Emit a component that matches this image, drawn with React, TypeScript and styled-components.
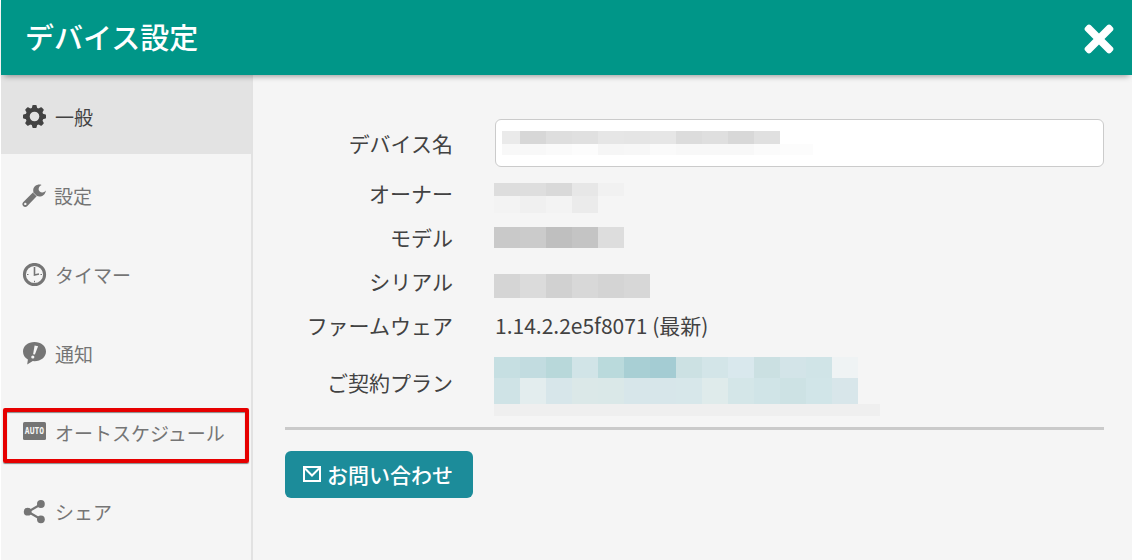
import React from "react";
import styled, { createGlobalStyle } from "styled-components";
import { FaTimes } from "react-icons/fa";

const GlobalStyle = createGlobalStyle`
  *, *::before, *::after { box-sizing: border-box; }
  body {
    margin: 0;
    background: #fff;
    color: #424242;
    font-family: "Noto Sans CJK JP", "Noto Sans", sans-serif;
  }
`;

const Page = styled.div`
  min-height: 100vh;
  display: flex;
  flex-direction: column;
  padding-left: 1px;
`;

const Header = styled.header`
  position: relative;
  z-index: 1;
  display: flex;
  align-items: center;
  justify-content: space-between;
  height: 75px;
  padding: 2px 12px 0 24px;
  background: #009688;
  color: #fff;
  box-shadow: 0 4px 6px -3px rgba(0, 0, 0, 0.4);
`;

const Title = styled.h1`
  margin: 0 0 6px;
  font-size: 29px;
  line-height: 44px;
  font-weight: 500;
`;

const CloseButton = styled.button`
  display: flex;
  padding: 0;
  border: 0;
  background: none;
  color: inherit;
  cursor: pointer;
`;

const Body = styled.div`
  flex: 1;
  display: flex;
  background: #f5f5f5;
`;

const Sidebar = styled.nav`
  flex: none;
  width: 252px;
  border-right: 2px solid #e2e2e2;
`;

const NavItem = styled.a<{ $active?: boolean }>`
  position: relative;
  display: flex;
  align-items: center;
  gap: 8px;
  height: 79px;
  padding: 5px 0 0 21px;
  font-size: 19px;
  line-height: 28px;
  text-decoration: none;
  color: ${(p) => (p.$active ? "#424242" : "#757575")};
  background: ${(p) => (p.$active ? "#e3e3e3" : "transparent")};

  svg { flex: none; }
`;

const Highlight = styled.span`
  position: absolute;
  inset: 17px 2px 7px 2px;
  border: 4px solid #e60000;
  border-radius: 2px;
  box-shadow: 0 1px 1px rgba(0, 0, 0, 0.45), inset 0 1px 1px rgba(0, 0, 0, 0.45);
`;

const Main = styled.main`
  flex: 1;
  min-width: 0;
  padding: 44px 28px 32px 32px;
`;

const Row = styled.div`
  display: grid;
  grid-template-columns: 168px 1fr;
  column-gap: 42px;
  align-items: center;
  min-height: 44px;
  font-size: 21px;
  line-height: 32px;

  &:first-child { margin-bottom: 4px; }
`;

const Label = styled.label`
  text-align: right;
`;

const Term = styled.span`
  text-align: right;
`;

const InputBox = styled.div`
  position: relative;
`;

const TextInput = styled.input`
  display: block;
  width: 100%;
  height: 48px;
  padding: 0 8px;
  border: 1px solid #cbcbcb;
  border-radius: 6px;
  background: #fff;
  font: inherit;
`;

const InputMask = styled.div`
  position: absolute;
  top: 12px;
  left: 8px;
  pointer-events: none;
`;

const MaskBlock = styled.div<{ $inset: number }>`
  margin-left: -1px;
  padding-top: ${(p) => p.$inset}px;
`;

const MaskRow = styled.div<{ $height: number }>`
  display: flex;
  height: ${(p) => p.$height}px;
`;

const MaskCell = styled.span<{ $color: string; $width: number }>`
  width: ${(p) => p.$width}px;
  background: ${(p) => p.$color};
`;

const Rule = styled.hr`
  height: 3px;
  margin: 11px 0 21px;
  border: 0;
  background: #cacaca;
`;

const ContactButton = styled.button`
  display: flex;
  align-items: center;
  gap: 6px;
  height: 47px;
  padding: 0 20px 2px 18px;
  border: 0;
  border-radius: 6px;
  background: #1c8c9a;
  color: #fff;
  font-family: inherit;
  font-size: 21px;
  line-height: 32px;
  font-weight: 500;
  cursor: pointer;
`;

type Cell = string | [string, number];
type Band = { height: number; cells: Cell[] };

/** Pixelated block that hides a private value. */
function Mask({ bands, inset = 0 }: { bands: Band[]; inset?: number }) {
  return (
    <MaskBlock $inset={inset} aria-hidden="true">
      {bands.map((band, i) => (
        <MaskRow key={i} $height={band.height}>
          {band.cells.map((cell, j) => {
            const [color, width] = typeof cell === "string" ? [cell, 26] : cell;
            return <MaskCell key={j} $color={color} $width={width} />;
          })}
        </MaskRow>
      ))}
    </MaskBlock>
  );
}

const nameMask: Band[] = [
  { height: 13, cells: [["#eaeaea", 18], "#d7d7d7", "#dedede", "#e0e0e0", "#e6e6e6", "#e5e5e5", "#e6e6e6", "#dcdcdc", "#dfdfdf", "#d8d8d8", "#e0e0e0"] },
  { height: 11, cells: [["#f8f8f8", 44], "#fafafa", "#fcfcfc", "#f6f6f6", "#f7f7f7", "#fafafa", ["#f8f8f8", 78], "#fbfbfb", ["#fcfcfc", 33]] },
];
const ownerMask: Band[] = [
  { height: 13, cells: ["#dddddd", "#dedede", "#d9d9d9", "#e7e7e7", "#f1f1f1"] },
  { height: 17, cells: ["#f3f3f3", "#f0f0f0", "#f3f3f3", "#ebebeb"] },
];
const modelMask: Band[] = [
  { height: 21, cells: ["#c9c9c9", "#cbcbcb", "#bfbfbf", "#c4c4c4", "#dddddd"] },
];
const serialMask: Band[] = [
  { height: 24, cells: ["#d5d5d5", "#dbdbdb", "#d1d1d1", "#d8d8d8", "#d4d4d4", "#d7d7d7"] },
];
const planMask: Band[] = [
  { height: 21, cells: ["#c6dfe2", "#c2dce0", "#b8d8da", "#d1e4e7", "#badadc", "#a8cfd4", "#a4ccd3", "#cce1e3", "#d3e5e8", "#d9e8ed", "#cbe0e2", "#d3e4e8", "#d0e4e7", "#eff3f4"] },
  { height: 26, cells: ["#cfe3e6", "#e3edee", "#d7e6ea", "#dbe8e8", "#dae8e8", "#d7e6ea", "#d7e6ea", "#d7e7ea", "#dfebeb", "#d4e6e8", "#d0e4e7", "#cde2e4", "#d1e5e8", "#d8e6ea"] },
  { height: 12, cells: [["#efefef", 386]] },
];

const GearIcon = () => (
  <svg width="25" height="24" viewBox="-12.5 -11.5 25 24" aria-hidden="true">
    <circle r="6.9" fill="none" stroke="currentColor" strokeWidth="4.2" />
    {[0, 45, 90, 135, 180, 225, 270, 315].map((a) => (
      <path key={a} transform={`rotate(${a})`} d="M-3-7.5L-2-11Q-1.800-11.500-1.200-11.500H1.200Q1.800-11.500 2-11L3-7.500Z" fill="currentColor" />
    ))}
  </svg>
);

const WrenchIcon = () => (
  <svg width="24" height="24" viewBox="0 0 24 24" aria-hidden="true">
    <path
      fill="currentColor"
      fillRule="evenodd"
      d="M19.6.9C16-.6 11.5 1.8 11.2 6q0 1 .2 1.9L1.1 18.2c-1 1-1 2.8 0 3.9s2.900 1.200 4 .2L14.900 12.100c3.700 1.500 8.500-.6 8.900-5.600q-1.300 2-3.500 2c-2 0-3.600-1.300-3.700-3.200 0-2.100 1-3.400 3-4.400ZM3.300 18.700a1.200 1.200 0 1 1 0 2.400 1.200 1.200 0 0 1 0-2.400Z"
    />
    <path d="m10.300 7.700 5 5" stroke="#f5f5f5" strokeWidth=".6" />
  </svg>
);

const ClockIcon = () => (
  <svg width="25" height="24" viewBox="0 0 25 24" fill="none" stroke="currentColor" aria-hidden="true">
    <circle cx="12.500" cy="11.500" r="10.100" strokeWidth="3" />
    <path d="M12.500 4V12L17 11" strokeWidth="1.600" />
    <path d="M12.500 17.800v1.500M5 11.500h1.500M18.500 11.500H20" strokeWidth="1" />
  </svg>
);

const NoticeIcon = () => (
  <svg width="25" height="24" viewBox="0 1 25 24" aria-hidden="true">
    <path fill="currentColor" d="M12.500 1C6 1 1 5 1 10.600c0 3.400 1.900 6.300 4.900 8L5.200 23.500l5.600-3.400q.9.1 1.700.1C19 20.200 24 16.200 24 10.600S19 1 12.500 1Z" />
    <path fill="#f5f5f5" d="m12.600 4.600 3.500.6-3.200 8.300-1.800-.3Z" />
    <circle cx="10.800" cy="16" r="1.600" fill="#f5f5f5" />
  </svg>
);

const AutoIcon = () => (
  <svg width="25" height="24" viewBox="0 0 25 24" aria-hidden="true">
    <rect x="1" y="1" width="23" height="18" rx="1.500" fill="currentColor" />
    <text x="12.500" y="13" textAnchor="middle" fontFamily="'DejaVu Sans Mono', monospace" fontWeight="700" fontSize="8" fill="#f5f5f5">AUTO</text>
  </svg>
);

const ShareIcon = () => (
  <svg width="25" height="24" viewBox="0 0 25 24" aria-hidden="true">
    <path d="M18.900 4.300 6 11.800l12.900 7.500" fill="none" stroke="currentColor" strokeWidth="2.200" />
    <g fill="currentColor">
      <circle cx="18.900" cy="4" r="3.900" />
      <circle cx="5.700" cy="11.700" r="3.900" />
      <circle cx="18.900" cy="19.300" r="3.900" />
    </g>
  </svg>
);

const MailIcon = () => (
  <svg width="18" height="16" viewBox="0 0 18 16" fill="none" stroke="currentColor" strokeWidth="2" aria-hidden="true">
    <path d="M1 1H17V15H1ZM2 2.500 9 9.500 16 2.500" />
  </svg>
);

const navItems = [
  { label: "一般", Icon: GearIcon, active: true },
  { label: "設定", Icon: WrenchIcon },
  { label: "タイマー", Icon: ClockIcon },
  { label: "通知", Icon: NoticeIcon },
  { label: "オートスケジュール", Icon: AutoIcon, highlighted: true },
  { label: "シェア", Icon: ShareIcon },
];

export default function App() {
  return (
    <Page>
      <GlobalStyle />
      <Header>
        <Title>デバイス設定</Title>
        <CloseButton type="button" aria-label="閉じる">
          <FaTimes size={42} />
        </CloseButton>
      </Header>
      <Body>
        <Sidebar>
          {navItems.map(({ label, Icon, active, highlighted }) => (
            <NavItem key={label} href="#" $active={active} aria-current={active ? "page" : undefined}>
              <Icon />
              <span>{label}</span>
              {highlighted && <Highlight />}
            </NavItem>
          ))}
        </Sidebar>
        <Main>
          <Row>
            <Label htmlFor="device-name">デバイス名</Label>
            <InputBox>
              <TextInput id="device-name" type="text" />
              <InputMask>
                <Mask bands={nameMask} />
              </InputMask>
            </InputBox>
          </Row>
          <Row>
            <Term>オーナー</Term>
            <Mask bands={ownerMask} inset={10} />
          </Row>
          <Row>
            <Term>モデル</Term>
            <Mask bands={modelMask} />
          </Row>
          <Row>
            <Term>シリアル</Term>
            <Mask bands={serialMask} inset={10} />
          </Row>
          <Row>
            <Term>ファームウェア</Term>
            <span>1.14.2.2e5f8071 (最新)</span>
          </Row>
          <Row>
            <Term>ご契約プラン</Term>
            <Mask bands={planMask} inset={10} />
          </Row>
          <Rule />
          <ContactButton type="button">
            <MailIcon />
            <span>お問い合わせ</span>
          </ContactButton>
        </Main>
      </Body>
    </Page>
  );
}
